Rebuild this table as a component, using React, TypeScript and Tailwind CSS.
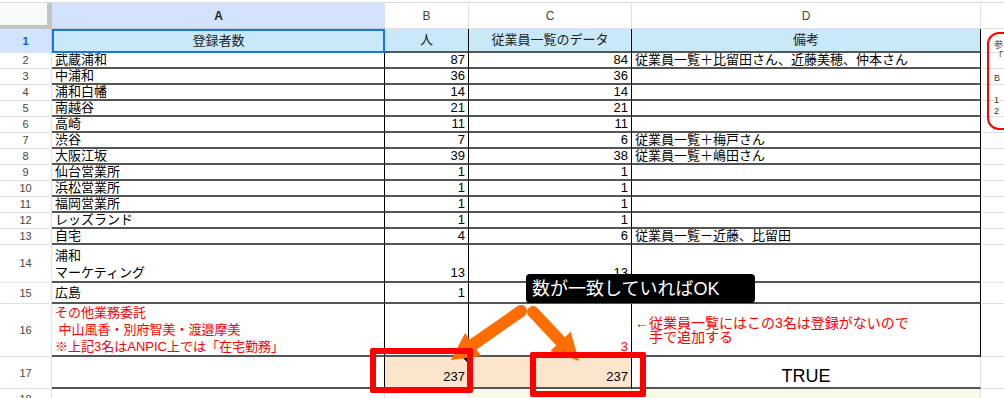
import React from "react";

type Row = { n: number; a: string; b: string; c: string; d?: string };

const rows: Row[] = [
  { n: 2, a: "武蔵浦和", b: "87", c: "84", d: "従業員一覧＋比留田さん、近藤美穂、仲本さん" },
  { n: 3, a: "中浦和", b: "36", c: "36" },
  { n: 4, a: "浦和白幡", b: "14", c: "14" },
  { n: 5, a: "南越谷", b: "21", c: "21" },
  { n: 6, a: "高崎", b: "11", c: "11" },
  { n: 7, a: "渋谷", b: "7", c: "6", d: "従業員一覧＋梅戸さん" },
  { n: 8, a: "大阪江坂", b: "39", c: "38", d: "従業員一覧＋嶋田さん" },
  { n: 9, a: "仙台営業所", b: "1", c: "1" },
  { n: 10, a: "浜松営業所", b: "1", c: "1" },
  { n: 11, a: "福岡営業所", b: "1", c: "1" },
  { n: 12, a: "レッズランド", b: "1", c: "1" },
  { n: 13, a: "自宅", b: "4", c: "6", d: "従業員一覧－近藤、比留田" },
];

function RowNum({ n }: { n: number }) {
  return (
    <div className="w-[52px] shrink-0 flex items-center justify-center border-r border-b border-[#e1e1e1] bg-white text-[11px] text-[#444746]">
      {n}
    </div>
  );
}

// the dark line under every data row
const cellA = "w-[333px] shrink-0 border-r border-black border-b-2 border-b-[#555] flex items-end pl-[3px] overflow-hidden whitespace-nowrap";
const cellB = "w-[84px] shrink-0 border-r border-black border-b-2 border-b-[#555] flex items-end justify-end pr-[3px]";
const cellC = "w-[163px] shrink-0 border-r border-black border-b-2 border-b-[#555] flex items-end justify-end pr-[3px]";
const cellD = "w-[349px] shrink-0 border-r border-black border-b-2 border-b-[#555] flex items-end pl-[3px] overflow-hidden whitespace-nowrap";
const cellE = "flex-1 border-b border-[#e1e1e1]";

function Arrow({ x1, y1, x2, y2 }: { x1: number; y1: number; x2: number; y2: number }) {
  const dx = x2 - x1;
  const dy = y2 - y1;
  const len = Math.hypot(dx, dy);
  const ux = dx / len;
  const uy = dy / len;
  const px = -uy;
  const py = ux;
  const hl = 27;
  const hw = 14;
  const bx = x2 - ux * hl;
  const by = y2 - uy * hl;
  return (
    <g fill="#ff6d01" stroke="#ff6d01">
      <line x1={x1} y1={y1} x2={bx + ux * 3} y2={by + uy * 3} strokeWidth={12} strokeLinecap="round" />
      <polygon
        strokeWidth={0}
        points={`${x2},${y2} ${bx + px * hw},${by + py * hw} ${bx - px * hw},${by - py * hw}`}
      />
    </g>
  );
}

export default function App() {
  return (
    <div className="relative w-[1004px] h-[398px] overflow-hidden bg-white text-[13px] text-black font-['Liberation_Sans','Noto_Sans_CJK_JP',sans-serif]">
      {/* top strip */}
      <div className="h-[3px] border-b border-[#dadce0] bg-white" />

      {/* column letters */}
      <div className="flex h-[26px] text-[12px] text-[#444746]">
        <div className="w-[52px] shrink-0 bg-[#f8f9fa] border-r-[5px] border-b-[4px] border-[#c4c4c4]" />
        <div className="w-[333px] shrink-0 bg-[#d3e3fd] border-b border-[#c4c7c5] flex items-center justify-center font-bold text-[#1f1f1f]">
          A
        </div>
        <div className="w-[84px] shrink-0 bg-white border-r border-b border-[#e1e1e1] flex items-center justify-center">B</div>
        <div className="w-[163px] shrink-0 bg-white border-r border-b border-[#e1e1e1] flex items-center justify-center">C</div>
        <div className="w-[349px] shrink-0 bg-white border-r border-b border-[#e1e1e1] flex items-center justify-center">D</div>
        <div className="flex-1 bg-white border-b border-[#e1e1e1]" />
      </div>

      {/* row 1 */}
      <div className="flex h-[24px]">
        <div className="w-[52px] shrink-0 bg-[#d3e3fd] border-r border-[#c4c7c5] flex items-center justify-center text-[11px] font-bold text-[#0b57d0]">
          1
        </div>
        <div className="w-[333px] shrink-0 bg-[#c9e9f9] border-2 border-[#1a73e8] flex items-center justify-center text-[#222]">
          登録者数
        </div>
        <div className="w-[84px] shrink-0 bg-[#c9e9f9] border-r border-black border-b-2 border-b-[#555] flex items-center justify-center text-[#222]">
          人
        </div>
        <div className="w-[163px] shrink-0 bg-[#c9e9f9] border-r border-black border-b-2 border-b-[#555] flex items-center justify-center text-[#222]">
          従業員一覧のデータ
        </div>
        <div className="w-[349px] shrink-0 bg-[#c9e9f9] border-r border-black border-b-2 border-b-[#555] flex items-center justify-center text-[#222]">
          備考
        </div>
        <div className={cellE} />
      </div>

      {/* rows 2-13 */}
      {rows.map((r) => (
        <div key={r.n} className="flex h-[16px] leading-[15px]">
          <RowNum n={r.n} />
          <div className={cellA}>{r.a}</div>
          <div className={cellB}>{r.b}</div>
          <div className={cellC}>{r.c}</div>
          <div className={cellD}>{r.d}</div>
          <div className={cellE} />
        </div>
      ))}

      {/* row 14 */}
      <div className="flex h-[38px] leading-[17px]">
        <RowNum n={14} />
        <div className={cellA}>
          <div>
            浦和
            <br />
            マーケティング
          </div>
        </div>
        <div className={cellB}>13</div>
        <div className={cellC}>13</div>
        <div className={cellD} />
        <div className={cellE} />
      </div>

      {/* row 15 */}
      <div className="flex h-[21px] leading-[18px]">
        <RowNum n={15} />
        <div className={cellA}>広島</div>
        <div className={cellB}>1</div>
        <div className={cellC} />
        <div className={cellD} />
        <div className={cellE} />
      </div>

      {/* row 16 */}
      <div className="flex h-[53px] leading-[17px] text-[#ff0000]">
        <RowNum n={16} />
        <div className={cellA}>
          <div>
            その他業務委託
            <br />
            {"\u00a0中山風香・別府智美・渡邉摩美"}
            <br />
            ※上記3名はANPIC上では「在宅勤務」
          </div>
        </div>
        <div className={cellB} />
        <div className={cellC}>3</div>
        <div className={cellD}>
          <div className="text-[14px] leading-[14px] pb-[11px]">
            ←従業員一覧にはこの3名は登録がないので
            <br />
            {"\u3000手で追加する"}
          </div>
        </div>
        <div className={cellE} />
      </div>

      {/* row 17 */}
      <div className="flex h-[32px] leading-[16px]">
        <RowNum n={17} />
        <div className={cellA} />
        <div className="relative w-[84px] shrink-0 bg-[#fce5cd] border-r border-black border-b-2 border-b-[#555] flex items-end justify-end pr-[3px] pb-[2px]">
          237
          <span className="absolute right-0 top-0 border-t-[6px] border-l-[6px] border-t-black border-l-transparent" />
        </div>
        <div className="w-[163px] shrink-0 bg-[#fce5cd] border-r border-black border-b-2 border-b-[#555] flex items-end justify-end pr-[3px] pb-[2px]">
          237
        </div>
        <div className="w-[349px] shrink-0 border-r border-[#e1e1e1] border-b-2 border-b-[#555] flex items-end justify-center pb-[1px] text-[18px] leading-[20px]">
          TRUE
        </div>
        <div className={cellE} />
      </div>

      {/* row 18 */}
      <div className="flex h-[21px]">
        <div className="w-[52px] shrink-0 flex items-start justify-center border-r border-[#e1e1e1] text-[11px] text-[#444746] leading-[16px] pt-[2px]">
          18
        </div>
        <div className="w-[333px] shrink-0 border-r border-[#e1e1e1]" />
        <div className="w-[84px] shrink-0 border-r border-[#e1e1e1]" />
        <div className="w-[163px] shrink-0 border-r border-[#e1e1e1] bg-[#f6fbe9]" />
        <div className="w-[349px] shrink-0 border-r border-[#e1e1e1] bg-[#f6fbe9]" />
        <div className="flex-1" />
      </div>

      {/* note box cut off at right edge */}
      <div className="absolute left-[987px] top-[32px] w-[40px] h-[98px] border-2 border-[#ff0000] rounded-[12px] pl-[5px] pt-[6px] text-[9px] leading-[11px] text-[#333]">
        参
        <br />「<br />
        <br />B<br />
        <br />1<br />2
      </div>

      {/* arrows */}
      <svg className="absolute left-0 top-0" width={1004} height={398}>
        <Arrow x1={521} y1={311} x2={451} y2={360} />
        <Arrow x1={533} y1={312} x2={579} y2={361} />
      </svg>

      {/* red highlight boxes */}
      <div className="absolute left-[370px] top-[348px] w-[103px] h-[45px] border-[6px] border-[#ff0000] rounded-[2px]" />
      <div className="absolute left-[530px] top-[352px] w-[116px] h-[45px] border-[6px] border-[#ff0000] rounded-[2px]" />

      {/* callout */}
      <div className="absolute left-[526px] top-[274px] w-[229px] h-[29px] bg-black rounded-[4px] flex items-center pl-[6px] text-white text-[18px] leading-[22px]">
        数が一致していればOK
      </div>
    </div>
  );
}
